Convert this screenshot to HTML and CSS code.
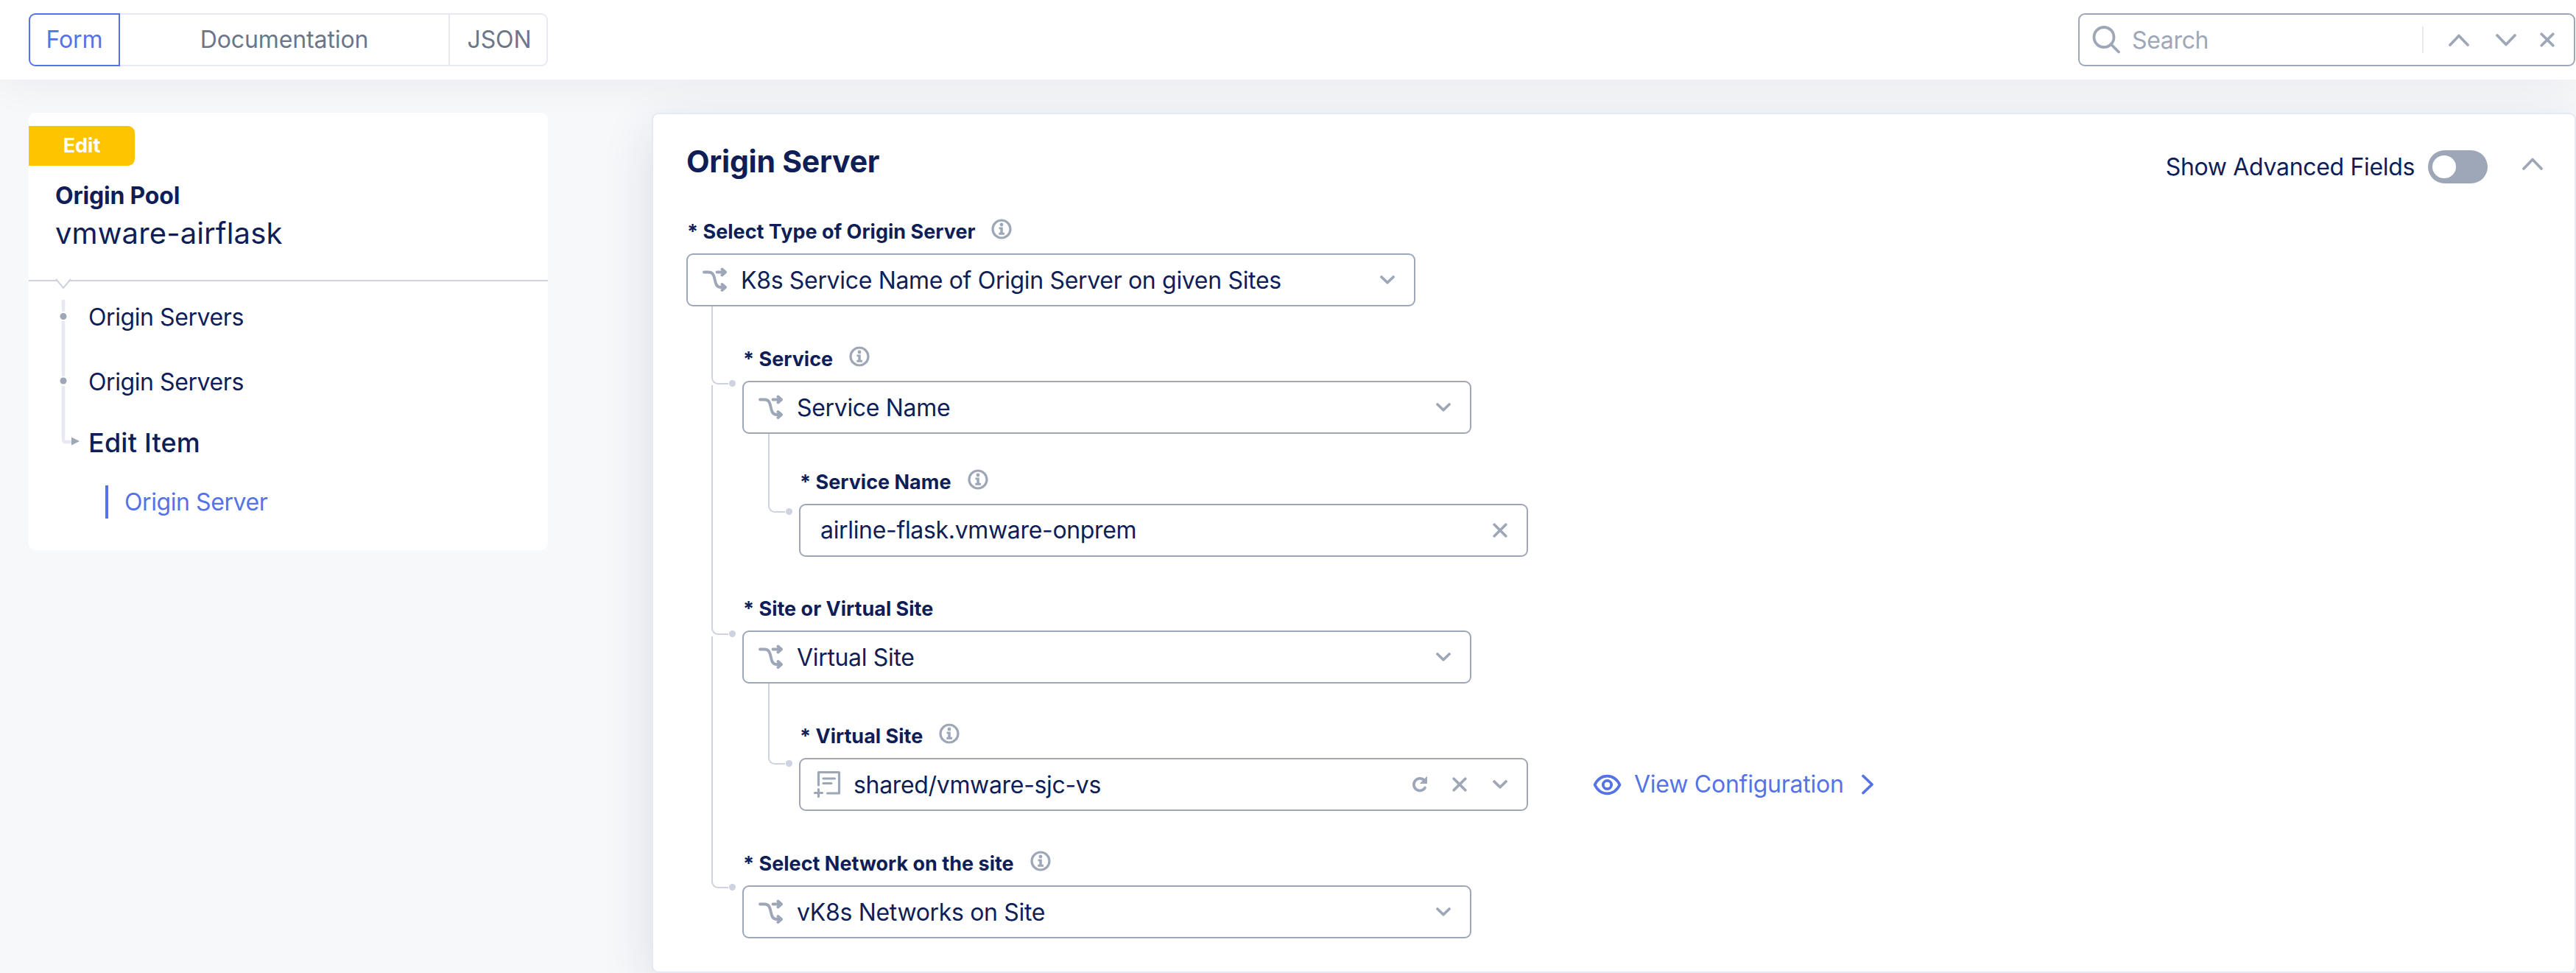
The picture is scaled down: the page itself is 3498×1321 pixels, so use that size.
FILE: index.html
```html
<!DOCTYPE html>
<html lang="en">
<head>
<meta charset="utf-8">
<title>Origin Pool</title>
<link rel="stylesheet" href="styles.css">
</head>
<body>
<svg class="defs" width="0" height="0">
  <symbol id="up" viewBox="0 0 28 17"><path d="M2 15 14 2.5 26 15"/></symbol>
  <symbol id="down" viewBox="0 0 28 17"><path d="M2 2 14 14.5 26 2"/></symbol>
  <symbol id="caret" viewBox="0 0 20 12"><path d="M2 2 10 9.8 18 2"/></symbol>
  <symbol id="cross" viewBox="0 0 20 20"><path d="M2.200 2.200 17.800 17.800M17.800 2.200 2.200 17.800"/></symbol>
  <symbol id="branch" viewBox="0 0 34 34"><path d="M2 6.500H8C21 6.500 12.500 27 25 27H30M19.500 6.500H30M26.500 2.500 31 6.500 26.500 10.500M26.500 23 31 27 26.500 31"/></symbol>
  <symbol id="info" viewBox="0 0 28 28"><circle cx="14" cy="14" r="12" fill="none" stroke="currentColor" stroke-width="3.200"/><circle cx="14" cy="8" r="2.400" fill="currentColor"/><path d="M10.500 11.500H15.800V18.800H18V21.700H10.300V18.800H12.300V14.200H10.500Z" fill="currentColor"/></symbol>
</svg>
<header class="topbar">
  <nav class="tabs">
    <button class="tab tab-form active">Form</button>
    <button class="tab tab-doc">Documentation</button>
    <button class="tab tab-json">JSON</button>
  </nav>
  <div class="search">
    <svg class="magnifier" viewBox="0 0 38 38"><circle cx="16" cy="15.500" r="13.500"/><path d="M25.500 25 36 35.500"/></svg>
    <span class="search-text">Search</span>
    <span class="search-rule"></span>
    <svg class="ico arrow"><use href="#up"/></svg>
    <svg class="ico arrow arrow-down"><use href="#down"/></svg>
    <svg class="ico cross"><use href="#cross"/></svg>
  </div>
</header>
<div class="layout">
  <aside class="side">
    <div class="side-head">
      <span class="badge">Edit</span>
      <div class="kind">Origin Pool</div>
      <div class="name">vmware-airflask</div>
      <svg class="notch" viewBox="0 0 24 16"><path class="notch-fill" d="M2 0H22L12 12Z"/><path d="M2 1 12 13 22 1"/></svg>
    </div>
    <div class="side-nav">
      <svg class="rail" viewBox="0 0 34 204"><path class="rail-line" d="M14 0V16M14 29V104M14 117V190Q14 193 17 193H25"/><circle cx="14" cy="22.500" r="4.500"/><circle cx="14" cy="110" r="4.500"/><path class="rail-tip" d="M25 186.500 36 192 25 197.500Z"/></svg>
      <a class="step">Origin Servers</a>
      <a class="step">Origin Servers</a>
      <a class="step step-current">Edit Item</a>
      <a class="substep">Origin Server</a>
    </div>
  </aside>
  <main class="panel">
    <div class="panel-head">
      <h1>Origin Server</h1>
      <div class="advanced"><span class="t">Show Advanced Fields</span><span class="toggle"><span class="knob"></span></span>
      <svg class="ico arrow"><use href="#up"/></svg></div>
    </div>
    <section class="field">
      <label><span class="t">* Select Type of Origin Server</span><svg class="info"><use href="#info"/></svg></label>
      <div class="box"><svg class="ico branch"><use href="#branch"/></svg><span class="value">K8s Service Name of Origin Server on given Sites</span><svg class="ico caret"><use href="#caret"/></svg></div>
    </section>
    <section class="field l1 f-service">
      <i class="link"></i>
      <label><span class="t">* Service</span><svg class="info"><use href="#info"/></svg></label>
      <div class="box"><svg class="ico branch"><use href="#branch"/></svg><span class="value">Service Name</span><svg class="ico caret"><use href="#caret"/></svg></div>
    </section>
    <section class="field l2 f-name">
      <i class="link"></i>
      <label><span class="t">* Service Name</span><svg class="info"><use href="#info"/></svg></label>
      <div class="box box-plain"><span class="value">airline-flask.vmware-onprem</span><svg class="ico cross"><use href="#cross"/></svg></div>
    </section>
    <section class="field l1 f-site">
      <i class="link"></i>
      <label><span class="t">* Site or Virtual Site</span></label>
      <div class="box"><svg class="ico branch"><use href="#branch"/></svg><span class="value">Virtual Site</span><svg class="ico caret"><use href="#caret"/></svg></div>
    </section>
    <section class="field l2 f-vsite">
      <i class="link"></i>
      <label><span class="t">* Virtual Site</span><svg class="info"><use href="#info"/></svg></label>
      <div class="row">
        <div class="box box-ref">
          <svg class="ico listadd" viewBox="0 0 37 38"><path d="M6.500 20V2.500H34.500V31H18.500M13 11H28.500M13 17.500H24M1.500 30.500H11.500M6.500 25.500V35.500"/></svg>
          <span class="value">shared/vmware-sjc-vs</span>
          <svg class="ico refresh" viewBox="0 0 22 22"><path d="M18 15.500A8.200 8.200 0 1 1 17 5.500"/><path class="solid" d="M20.500 1V9.500H12Z"/></svg>
          <svg class="ico cross"><use href="#cross"/></svg>
          <svg class="ico caret"><use href="#caret"/></svg>
        </div>
        <a class="view">
          <svg class="ico eye" viewBox="0 0 36 26"><path d="M1.500 13C5 6 11 1.500 18 1.500S31 6 34.500 13C31 20 25 24.500 18 24.500S5 20 1.500 13Z"/><circle cx="18" cy="13" r="5.500"/></svg>
          <span class="t">View Configuration</span>
          <svg class="ico next" viewBox="0 0 18 28"><path d="M3 2.500 15 14 3 25.500"/></svg>
        </a>
      </div>
    </section>
    <section class="field l1 f-net">
      <i class="link"></i>
      <label><span class="t">* Select Network on the site</span><svg class="info"><use href="#info"/></svg></label>
      <div class="box"><svg class="ico branch"><use href="#branch"/></svg><span class="value">vK8s Networks on Site</span><svg class="ico caret"><use href="#caret"/></svg></div>
    </section>
  </main>
</div>
</body>
</html>
```
FILE: styles.css
```css
* { box-sizing: border-box; }
body { margin: 0; width: 3498px; height: 1321px; overflow: hidden; background: #f7f8fa; color: #0f1e57; font: 400 32px/40px Inter, "Liberation Sans", sans-serif; letter-spacing: -.33px; }
svg { display: block; flex: none; }
.defs { position: absolute; }
.ico { fill: none; stroke: currentColor; stroke-width: 3.7; stroke-linecap: round; stroke-linejoin: round; color: #9ea7b8; overflow: visible; }

.topbar { display: flex; justify-content: space-between; align-items: flex-start; height: 108px; padding: 18px 1px 0 39px; background: #fff; position: relative; box-shadow: 0 0 60px rgba(20, 30, 40, .07); }
.tabs { display: flex; width: 705px; height: 72px; }
.tab { font: inherit; letter-spacing: -.1px; color: #6b7788; background: #fff; border: 2px solid #e6e8f3; padding: 0; margin: 0; }
.tab-form { width: 124px; border-color: #5573e6; color: #5573e6; border-radius: 9px 0 0 9px; }
.tab-doc { width: 448px; border-left: 0; }
.tab-json { flex: 1; border-left: 0; border-radius: 0 9px 9px 0; padding-left: 3px; }
.search { display: flex; align-items: center; width: 675px; height: 72px; border: 2px solid #9ea7b8; border-radius: 9px; color: #9ea7b8; padding-left: 17px; }
.magnifier { width: 38px; height: 38px; fill: none; stroke: #9ea7b8; stroke-width: 3.8; stroke-linecap: round; }
.search-text { margin-left: 16px; width: 394px; padding-top: 1px; }
.search-rule { width: 2px; height: 36px; background: #e6e8f3; margin-right: 34px; }
.arrow { width: 28px; height: 17px; }
.arrow-down { margin: 0 32px 0 36px; }
.cross { width: 20px; height: 20px; }

.layout { display: flex; align-items: flex-start; padding: 45px 0 0 39px; gap: 141px; }
.side { width: 705px; height: 594px; }
.side-head { height: 229px; background: #fff; border-radius: 9px 9px 0 0; border-bottom: 2px solid #ced2e1; padding-top: 18px; position: relative; z-index: 1; }
.badge { display: block; width: 144px; height: 54px; background: #ffc400; color: #fff; font-weight: 700; font-size: 27px; letter-spacing: 0; line-height: 54px; text-align: center; border-radius: 0 9px 9px 0; }
.kind { font-weight: 700; letter-spacing: -.2px; margin: 21px 0 0 36px; }
.name { font-size: 40px; line-height: 50px; letter-spacing: .12px; margin: 6px 0 0 36px; }
.notch { position: absolute; left: 35px; bottom: -14px; width: 24px; height: 16px; fill: none; stroke: #ced2e1; stroke-width: 2; }
.notch-fill { fill: #fff; stroke: none; }
.side-nav { height: 365px; background: #fff; border-radius: 0 0 9px 9px; padding: 29px 0 0 81px; position: relative; display: flex; flex-direction: column; }
.rail { position: absolute; left: 33px; top: 25px; width: 34px; height: 204px; fill: #9ea7b8; overflow: visible; }
.rail-line { fill: none; stroke: #e6e8f3; stroke-width: 4.500; }
.step { height: 40px; margin-bottom: 48px; letter-spacing: -.42px; }
.step-current { font-size: 36px; font-weight: 500; letter-spacing: .2px; margin-top: -6px; margin-bottom: 38px; }
.substep { color: #5573e6; margin-left: 23px; height: 45px; line-height: 45px; border-left: 4px solid #5573e6; padding-left: 22px; letter-spacing: -.42px; }

.panel { flex: 1; height: 1168px; background: #fff; border: 2px solid #e6e8f3; border-radius: 9px; box-shadow: 0 20px 70px rgba(20, 30, 80, .12); padding-left: 45px; position: relative; z-index: 1; }
.panel-head { display: flex; justify-content: space-between; height: 133px; padding: 38px 43px 0 0; }
h1 { margin: 0; font-size: 41px; line-height: 52px; font-weight: 700; letter-spacing: -.25px; }
.advanced { display: flex; align-items: center; height: 66px; }
.toggle { width: 81px; height: 45px; border-radius: 23px; background: #9ea7b8; margin: 0 47px 0 18px; padding: 7px 6px; }
.advanced .arrow { margin-top: -7px; }
.advanced .t { padding-top: 1px; }
.knob { display: block; width: 32px; height: 31px; border-radius: 50%; background: #fff; }

.field { position: relative; margin-bottom: 45px; }
.l1 { margin-left: 76px; }
.l2 { margin-left: 153px; }
label { display: flex; height: 56px; padding: 7px 0 0 1px; font-size: 27px; line-height: 40px; font-weight: 700; letter-spacing: 0; }
.info { width: 28px; height: 28px; margin: 2px 0 0 22px; color: #9ea7b8; }
.box { display: flex; align-items: center; width: 990px; height: 72px; border: 2px solid #9ea7b8; border-radius: 9px; padding: 0 26px 0 20px; background: #fff; }
.branch { width: 34px; height: 34px; stroke-width: 3.9; }
.value { flex: 1; margin-left: 18px; padding-top: 2px; white-space: nowrap; }
.caret { width: 20px; height: 12px; }
.box-plain { padding-left: 9px; }
.box-plain .value { padding-top: 0; }
.box-ref { padding-left: 18px; }
.box-ref .value { margin-left: 17px; }
.listadd { width: 37px; height: 38px; stroke-width: 3.2; }
.refresh { width: 22px; height: 22px; margin-right: 33px; }
.refresh .solid { fill: currentColor; stroke-width: 1; }
.box-ref .cross { margin-right: 35px; }
.row { display: flex; align-items: center; }
.view { display: flex; align-items: center; margin-left: 89px; color: #5573e6; letter-spacing: -.25px; }
.view .ico { color: inherit; }
.eye { width: 37px; height: 27px; margin-right: 18px; }
.next { width: 18px; height: 28px; margin-left: 23px; }

.link { position: absolute; left: -42px; width: 23px; border: solid #ced2e1; border-width: 0 0 2px 2px; border-radius: 0 0 0 9px; }
.link::after { content: ""; position: absolute; right: -10px; bottom: -5px; width: 9px; height: 9px; border-radius: 50%; background: #ced2e1; }
.f-service .link { top: -45px; height: 106px; }
.f-name .link { top: -39px; height: 107px; }
.f-site .link { top: -277px; height: 339px; }
.f-vsite .link { top: -45px; height: 110px; }
.f-net .link { top: -282px; height: 342px; }
.f-name { margin-top: -6px; }
.f-site { margin-top: -1px; }
```
